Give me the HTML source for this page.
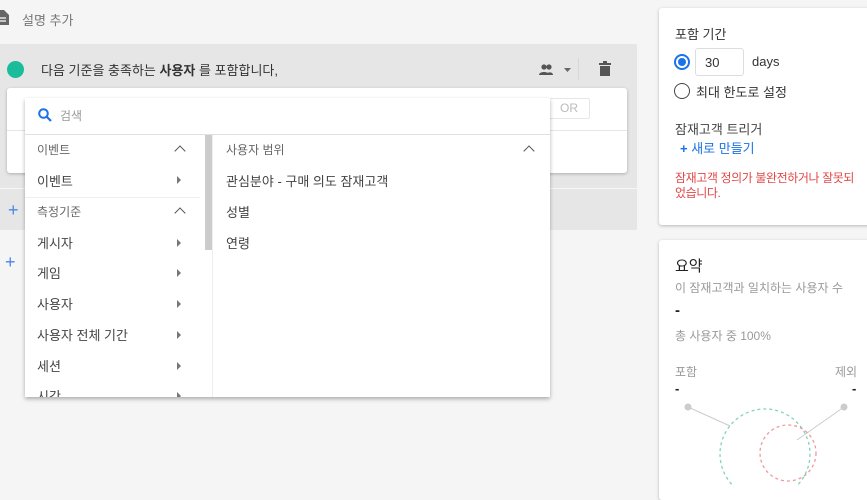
<!DOCTYPE html>
<html><head><meta charset="utf-8"><style>
*{box-sizing:border-box;margin:0;padding:0}
body{width:867px;height:486px;overflow:hidden;background:#f5f5f5;font-family:"Liberation Sans","Noto Sans CJK KR",sans-serif;position:relative;color:#333}
.a{position:absolute;white-space:nowrap}
.card{position:absolute;background:#fff;border-radius:3px;box-shadow:0 1px 3px rgba(0,0,0,.25)}
.li{position:absolute;left:12px;font-size:13px;color:#444}
.hd{font-size:12px;color:#666}
.tri{position:absolute;left:152px;width:0;height:0;border-left:4px solid #777;border-top:4px solid transparent;border-bottom:4px solid transparent}
.car{position:absolute;width:8px;height:8px;border-left:1.5px solid #555;border-top:1.5px solid #555;transform:rotate(45deg)}
</style></head><body>
<svg class="a" style="left:-3px;top:10px" width="12" height="15" viewBox="0 0 12 15"><path d="M0 0h7l5 5v10H0z" fill="#666"/><path d="M2 8h7M2 11h7" stroke="#fff" stroke-width="1.3"/></svg>
<div class="a" style="left:22px;top:10px;font-size:13px;color:#777">설명 추가</div>

<div class="a" style="left:0;top:44px;width:637px;height:186px;background:#e6e6e6"></div>
<div class="a" style="left:7px;top:61px;width:17px;height:17px;border-radius:50%;background:#1abc9c"></div>
<div class="a" style="left:41px;top:60px;font-size:13px;color:#333">다음 기준을 충족하는 <b>사용자</b> 를 포함합니다,</div>
<svg class="a" style="left:538px;top:63px" width="34" height="14"><circle cx="6" cy="4" r="2.6" fill="#555"/><circle cx="11" cy="4" r="2.6" fill="#555"/><path d="M1 12c0-4 10-4 10 0zM8 12c0-3 7-4 7 0z" fill="#555"/><path d="M26 5h7l-3.5 4z" fill="#666"/></svg>
<div class="a" style="left:578px;top:58px;width:1px;height:22px;background:#d6d6d6"></div>
<svg class="a" style="left:599px;top:61px" width="12" height="15"><path d="M0 2h12v2H0zM4 0h4v2H4zM1 5h10v10H1z" fill="#555"/></svg>

<div class="card" style="left:7px;top:88px;width:620px;height:85px"></div>
<div class="a" style="left:7px;top:130px;width:620px;height:1px;background:#e6e6e6"></div>
<div class="a" style="left:548px;top:98px;width:42px;height:21px;border:1px solid #e6e6e6;border-radius:2px;font-size:12px;color:#bbb;text-align:center;line-height:19px">OR</div>
<div class="a" style="left:0;top:188px;width:637px;height:1px;background:#f7f7f7"></div>
<div class="a" style="left:8px;top:200px;font-size:18px;color:#4a86e8">+</div>
<div class="a" style="left:5px;top:252px;font-size:18px;color:#4a86e8">+</div>

<div class="card" style="left:25px;top:98px;width:525px;height:299px;border-radius:0;box-shadow:0 2px 4px rgba(0,0,0,.3);overflow:hidden">
 <svg class="a" style="left:13px;top:10px" width="14" height="14"><circle cx="5.5" cy="5.5" r="4.3" stroke="#1a73e8" stroke-width="2" fill="none"/><path d="M8.5 8.5l4.5 4.5" stroke="#1a73e8" stroke-width="2.2"/></svg>
 <div class="a" style="left:35px;top:9px;font-size:12px;color:#999">검색</div>
 <div class="a" style="left:0;top:36px;width:525px;height:1px;background:#e0e0e0"></div>
 <div class="a" style="left:0;top:37px;width:180px;height:262px">
  <div class="li hd" style="top:6px">이벤트</div><div class="car" style="left:151px;top:12px"></div>
  <div class="li" style="top:36px">이벤트</div><div class="tri" style="top:41px"></div>
  <div class="a" style="left:0;top:62px;width:175px;height:1px;background:#eee"></div>
  <div class="li hd" style="top:68px">측정기준</div><div class="car" style="left:151px;top:74px"></div>
  <div class="li" style="top:98px">게시자</div><div class="tri" style="top:104px"></div>
  <div class="li" style="top:128px">게임</div><div class="tri" style="top:134px"></div>
  <div class="li" style="top:159px">사용자</div><div class="tri" style="top:165px"></div>
  <div class="li" style="top:190px">사용자 전체 기간</div><div class="tri" style="top:196px"></div>
  <div class="li" style="top:221px">세션</div><div class="tri" style="top:227px"></div>
  <div class="li" style="top:251px">시간</div><div class="tri" style="top:257px"></div>
 </div>
 <div class="a" style="left:180px;top:37px;width:7px;height:115px;background:#ccc"></div>
 <div class="a" style="left:187px;top:37px;width:1px;height:262px;background:#eee"></div>
 <div class="a" style="left:201px;top:43px;font-size:12px;color:#666">사용자 범위</div>
 <div class="car" style="left:500px;top:49px"></div>
 <div class="a" style="left:201px;top:73px;font-size:13px;color:#444">관심분야 - 구매 의도 잠재고객</div>
 <div class="a" style="left:201px;top:104px;font-size:13px;color:#444">성별</div>
 <div class="a" style="left:201px;top:135px;font-size:13px;color:#444">연령</div>
</div>

<div class="card" style="left:659px;top:8px;width:215px;height:217px"></div>
<div class="a" style="left:675px;top:24px;font-size:13px;color:#333">포함 기간</div>
<div class="a" style="left:674px;top:54px;width:16px;height:16px;border:2px solid #1a73e8;border-radius:50%"></div>
<div class="a" style="left:678px;top:58px;width:8px;height:8px;background:#1a73e8;border-radius:50%"></div>
<div class="a" style="left:695px;top:48px;width:49px;height:28px;border:1px solid #ddd;border-radius:3px;font-size:13px;padding:6px 0 0 9px">30</div>
<div class="a" style="left:752px;top:54px;font-size:13px;color:#333">days</div>
<div class="a" style="left:674px;top:83px;width:16px;height:16px;border:1.5px solid #444;border-radius:50%"></div>
<div class="a" style="left:696px;top:82px;font-size:13px;color:#333">최대 한도로 설정</div>
<div class="a" style="left:675px;top:119px;font-size:13px;color:#444">잠재고객 트리거</div>
<div class="a" style="left:680px;top:138px;font-size:13px;color:#1a73e8"><b>+</b> 새로 만들기</div>
<div class="a" style="left:675px;top:171px;font-size:12px;color:#e04848;line-height:15px;letter-spacing:-0.4px">잠재고객 정의가 불완전하거나 잘못되<br>었습니다.</div>

<div class="card" style="left:659px;top:240px;width:215px;height:260px"></div>
<div class="a" style="left:675px;top:255px;font-size:15px;color:#222">요약</div>
<div class="a" style="left:675px;top:279px;font-size:12px;color:#999">이 잠재고객과 일치하는 사용자 수</div>
<div class="a" style="left:675px;top:302px;font-size:15px;color:#222;font-weight:bold">-</div>
<div class="a" style="left:675px;top:327px;font-size:12px;color:#999">총 사용자 중 100%</div>
<div class="a" style="left:675px;top:363px;font-size:12px;color:#999">포함</div>
<div class="a" style="left:835px;top:363px;font-size:12px;color:#999">제외</div>
<div class="a" style="left:675px;top:381px;font-size:13px;color:#222;font-weight:bold">-</div>
<div class="a" style="left:852px;top:381px;font-size:13px;color:#222;font-weight:bold">-</div>
<svg class="a" style="left:659px;top:390px" width="208" height="96">
 <line x1="29" y1="17" x2="71" y2="36" stroke="#ccc"/><line x1="185" y1="17" x2="138" y2="50" stroke="#ccc"/>
 <circle cx="29" cy="17" r="3.5" fill="#ccc"/><circle cx="185" cy="17" r="3.5" fill="#ccc"/>
 <circle cx="106" cy="64" r="45" fill="none" stroke="#7fd3c3" stroke-width="1.3" stroke-dasharray="3 3"/>
 <circle cx="129" cy="63" r="28" fill="none" stroke="#ef9a9a" stroke-width="1.3" stroke-dasharray="3 3"/>
</svg>
</body></html>
